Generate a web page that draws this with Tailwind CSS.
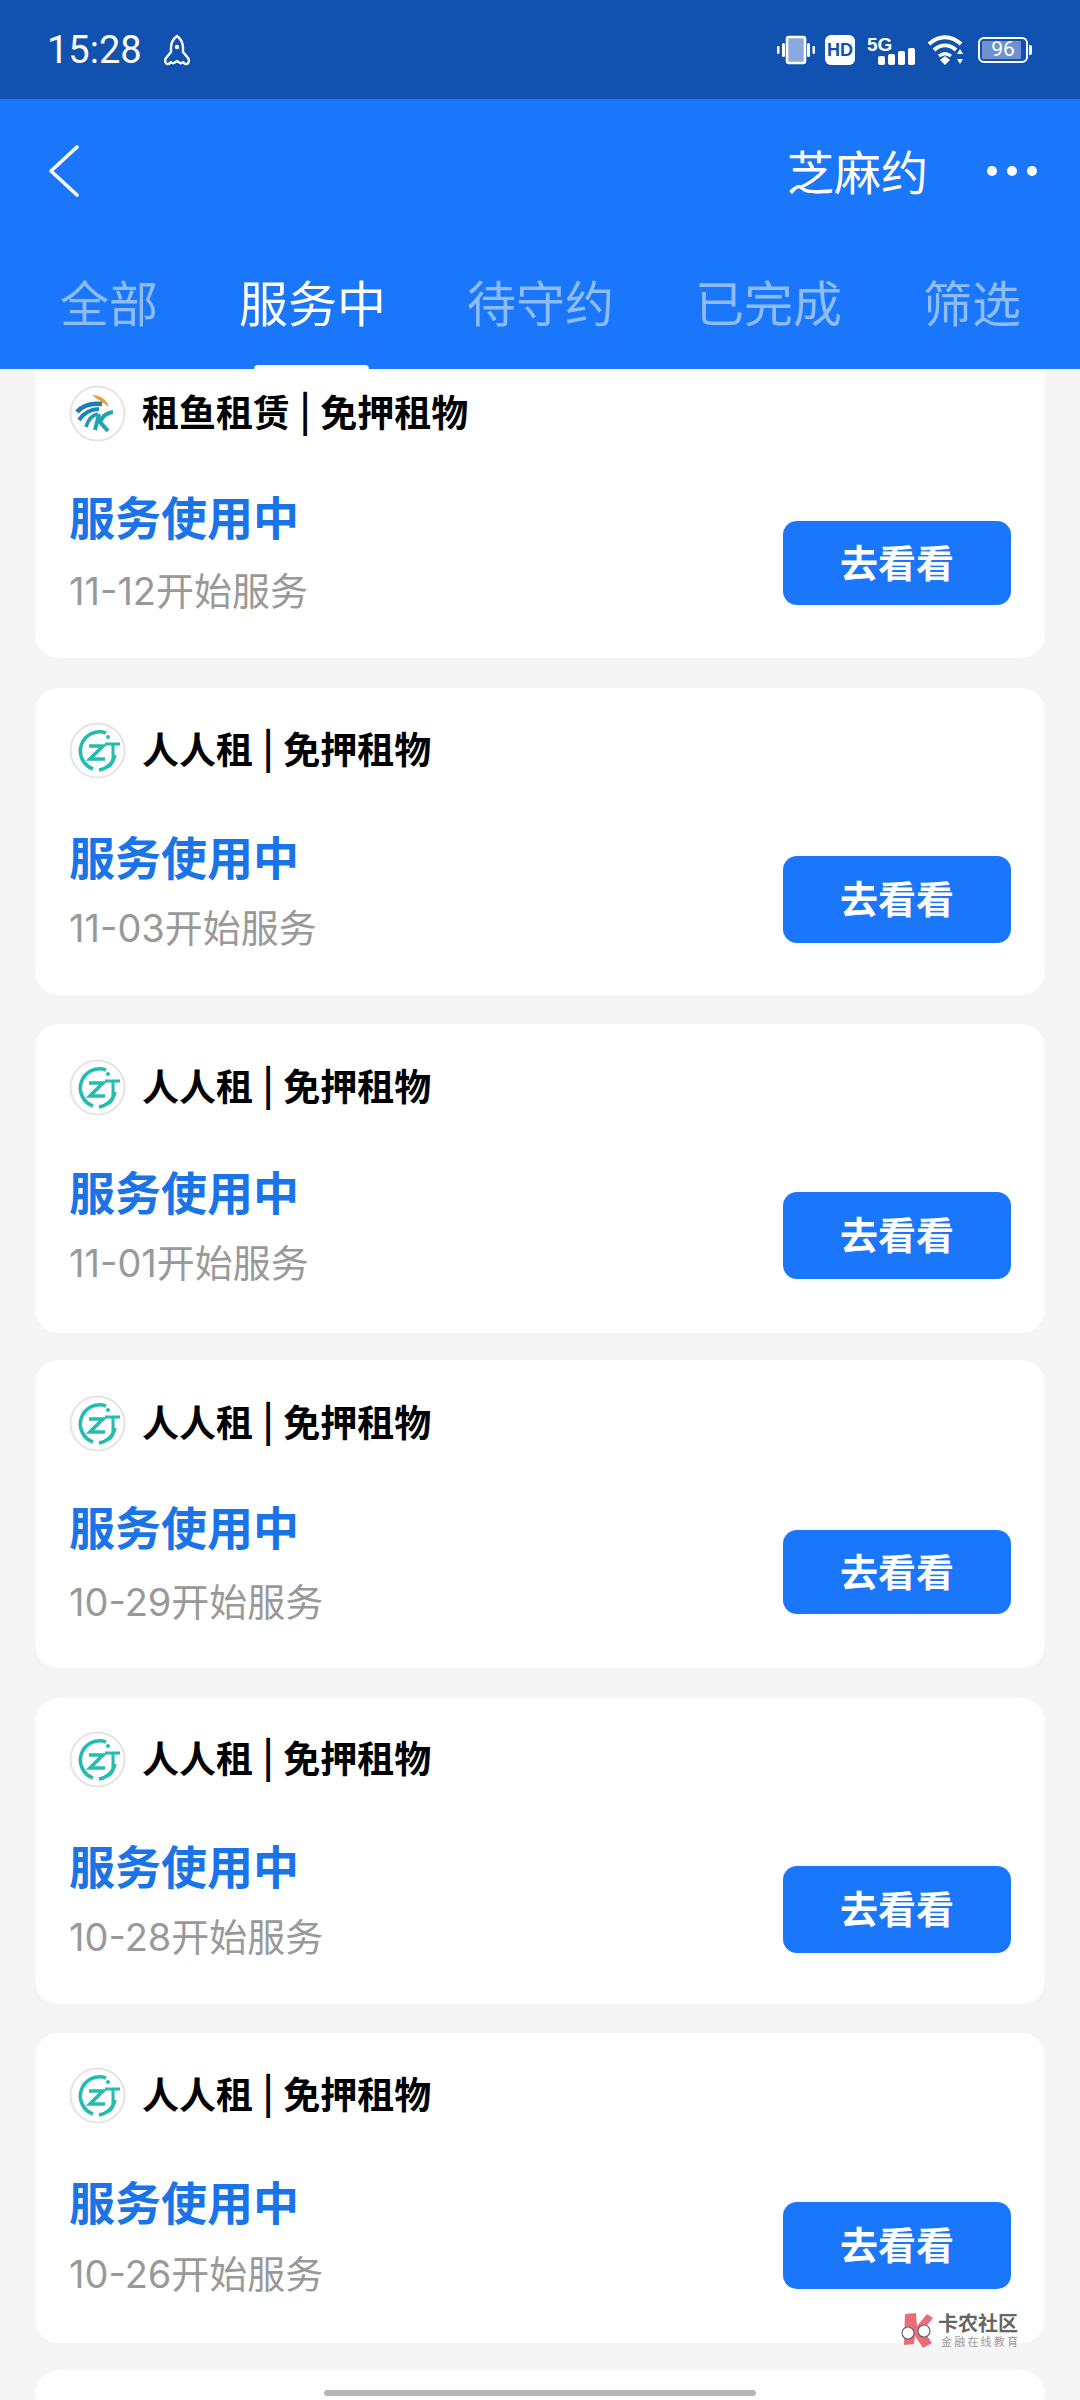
<!DOCTYPE html>
<html lang="zh-CN">

<head>
  <meta charset="UTF-8" />
  <meta name="viewport" content="width=device-width, initial-scale=1.0" />
  <title>芝麻约</title>
  <script src="https://cdn.jsdelivr.net/npm/@tailwindcss/browser@4"></script>
</head>

<body class="bg-[#f5f5f6] font-['Inter','Noto_Sans_CJK_SC',sans-serif]">
  <div class="relative w-[1080px] h-[2400px] overflow-hidden flex flex-col">
    <!-- Status bar -->
    <div class="h-[99px] shrink-0 bg-[#1151b0] flex items-center justify-between pl-[47px] pr-[48px] text-white">
      <div class="flex items-center gap-[21px]">
        <span class="text-[38px] leading-none font-normal font-['Roboto',sans-serif]">15:28</span>
        <svg class="w-[28px] h-[32px]" viewBox="0 0 28 32" fill="none" stroke="white" stroke-width="2.400" stroke-linejoin="round">
          <path d="M14 2c4 3 6 7 6 12v4l5 6c1.500 2 1 5-1 6-2 .8-3-1-4-2-1 1-2 2-3 1l-3-2-3 2c-1 1-2 0-3-1-1 1-2 2.800-4 2-2-1-2.500-4-1-6l5-6v-4c0-5 2-9 6-12z" />
          <circle cx="14" cy="13" r="2.200" fill="white" stroke="none" />
        </svg>
      </div>
      <div class="flex items-center">
        <svg class="w-[38px] h-[30px]" viewBox="0 0 38 30" fill="none">
          <rect x="10" y="2" width="18" height="26" rx="2" fill="#8aa9dc" stroke="white" stroke-width="2.600" />
          <rect x="5" y="8" width="3" height="14" rx="1.500" fill="white" />
          <rect x="30" y="8" width="3" height="14" rx="1.500" fill="white" />
          <rect x="0" y="11" width="2.500" height="8" rx="1.200" fill="white" />
          <rect x="35.500" y="11" width="2.500" height="8" rx="1.200" fill="white" />
        </svg>
        <span class="ml-[10px] w-[30px] h-[30px] bg-white rounded-[6px] flex items-center justify-center text-[#1151b0] text-[18px] font-black leading-none font-['Liberation_Sans',sans-serif]">HD</span>
        <div class="relative ml-[12px] w-[48px] h-[30px]">
          <span class="absolute left-0 top-0 text-[19px] font-bold leading-none font-['Liberation_Sans',sans-serif]">5G</span>
          <div class="absolute right-0 bottom-0 flex items-end gap-[3px]">
            <span class="w-[7px] h-[9px] bg-white rounded-[2px]"></span>
            <span class="w-[7px] h-[11px] bg-white rounded-[2px]"></span>
            <span class="w-[7px] h-[14px] bg-white rounded-[2px]"></span>
            <span class="w-[7px] h-[17px] bg-white rounded-[2px]"></span>
          </div>
        </div>
        <svg class="ml-[13px] w-[36px] h-[30px]" viewBox="0 0 36 30" fill="none">
          <path d="M1 9c10-9 22-9 32 0" stroke="white" stroke-width="4" />
          <path d="M6 15c7-6 15-6 22 0" stroke="white" stroke-width="4" />
          <path d="M11 21c4-3 8-3 12 0" stroke="white" stroke-width="3.400" />
          <path d="M12 25l5-4 5 4-5 5z" fill="white" />
          <path d="M32 14l3 5h-6zM32 29l3-5h-6z" fill="white" />
        </svg>
        <div class="ml-[14px] flex items-center">
          <div class="relative w-[50px] h-[26px] border-[2.500px] border-white rounded-[6px] p-[2px]">
            <div class="h-full w-[92%] bg-[#6f92cf] rounded-[1px]"></div>
            <span class="absolute inset-0 flex items-center justify-center text-[21px] leading-none text-white font-['Roboto',sans-serif]">96</span>
          </div>
          <span class="w-[3px] h-[10px] ml-[1px] bg-white rounded-r-[2px]"></span>
        </div>
      </div>
    </div>

    <!-- Nav -->
    <div class="relative z-10 h-[270px] shrink-0 bg-[#1a76fb] text-white">
      <div class="h-[144px] flex items-center justify-between pl-[49px] pr-[43px]">
        <svg class="w-[30px] h-[52px]" viewBox="0 0 30 52" fill="none" stroke="white" stroke-width="3.600" stroke-linecap="round" stroke-linejoin="round">
          <path d="M28 2L2 26l26 24" />
        </svg>
        <div class="flex items-center gap-[59px]">
          <span class="text-[47px] leading-none pt-[2px]">芝麻约</span>
          <div class="flex gap-[10px]">
            <span class="w-[10px] h-[10px] rounded-full bg-white"></span>
            <span class="w-[10px] h-[10px] rounded-full bg-white"></span>
            <span class="w-[10px] h-[10px] rounded-full bg-white"></span>
          </div>
        </div>
      </div>
      <div class="flex items-center gap-[81px] pl-[60px] pt-[37px] text-[49px] leading-none text-[#8dbcf8]">
        <span>全部</span>
        <span class="text-white">服务中</span>
        <span>待守约</span>
        <span>已完成</span>
        <span>筛选</span>
      </div>
      <div class="absolute left-[254px] bottom-[-2px] w-[115px] h-[6px] bg-white rounded-t-[4px]"></div>
    </div>

    <!-- Order list -->
    <div class="flex flex-col px-[35px] mt-[-17px]">
      <div class="h-[306px] shrink-0 bg-white rounded-[24px] pl-[34px] pr-[34px] pt-[33px]">
        <div class="flex items-center gap-[16px] h-[57px]">
          <svg class="w-[57px] h-[57px] shrink-0" viewBox="0 0 57 57" fill="none">
            <circle cx="28.500" cy="28.500" r="27" fill="white" stroke="#e4e4e4" stroke-width="2" />
            <path d="M23 10c7 0 14 3 17 12-5-4-11-7-17-12z" fill="#e6a23c" />
            <path d="M8 27C14 20 22 18 33 19" stroke="#1c7fb5" stroke-width="4.500" />
            <path d="M10 35C15 28 22 24 30 24" stroke="#1c86b8" stroke-width="4" />
            <path d="M17 42C19 35 23 30 29 29" stroke="#2295b8" stroke-width="3.500" />
            <path d="M26 45L30 29" stroke="#20a5b0" stroke-width="4" />
            <path d="M44 27C37 28 33 32 31 37L39 46" stroke="#20a5b0" stroke-width="4" />
          </svg>
          <span class="text-[37px] leading-none font-bold text-black">租鱼租赁 <span class="font-medium">|</span> 免押租物</span>
        </div>
        <div class="flex justify-between">
          <div class="mt-[46px]">
            <div class="text-[46px] leading-[60px] font-bold text-[#1a74e8]">服务使用中</div>
            <div class="mt-[19px] text-[38px] leading-[48px] text-[#999999]">11-12开始服务</div>
          </div>
          <button class="mt-[79px] w-[228px] h-[84px] bg-[#1a76fb] rounded-[14px] text-white text-[38px] font-bold">去看看</button>
        </div>
      </div>

      <div class="mt-[30px] h-[307px] shrink-0 bg-white rounded-[24px] pl-[34px] pr-[34px] pt-[34px]">
        <div class="flex items-center gap-[16px] h-[57px]">
          <svg class="w-[57px] h-[57px] shrink-0" viewBox="0 0 57 57" fill="none">
            <circle cx="28.500" cy="28.500" r="27" fill="white" stroke="#e4e4e4" stroke-width="2" />
            <path d="M37 11A19 19 0 1 0 24 47M30 48A19 19 0 0 0 46 33" stroke="#22bdb0" stroke-width="3.600" />
            <path d="M20 24h14L21 37h15" stroke="#22bdb0" stroke-width="3.600" />
            <path d="M36 22h15M44 22v14c0 5-3 8-6 9" stroke="#22bdb0" stroke-width="3" />
            <circle cx="39" cy="15" r="2" fill="#22bdb0" />
          </svg>
          <span class="text-[37px] leading-none font-bold text-black">人人租 <span class="font-medium">|</span> 免押租物</span>
        </div>
        <div class="flex justify-between">
          <div class="mt-[49px]">
            <div class="text-[46px] leading-[60px] font-bold text-[#1a74e8]">服务使用中</div>
            <div class="mt-[16px] text-[38px] leading-[48px] text-[#999999]">11-03开始服务</div>
          </div>
          <button class="mt-[77px] w-[228px] h-[87px] bg-[#1a76fb] rounded-[14px] text-white text-[38px] font-bold">去看看</button>
        </div>
      </div>

      <div class="mt-[29px] h-[309px] shrink-0 bg-white rounded-[24px] pl-[34px] pr-[34px] pt-[35px]">
        <div class="flex items-center gap-[16px] h-[57px]">
          <svg class="w-[57px] h-[57px] shrink-0" viewBox="0 0 57 57" fill="none">
            <circle cx="28.500" cy="28.500" r="27" fill="white" stroke="#e4e4e4" stroke-width="2" />
            <path d="M37 11A19 19 0 1 0 24 47M30 48A19 19 0 0 0 46 33" stroke="#22bdb0" stroke-width="3.600" />
            <path d="M20 24h14L21 37h15" stroke="#22bdb0" stroke-width="3.600" />
            <path d="M36 22h15M44 22v14c0 5-3 8-6 9" stroke="#22bdb0" stroke-width="3" />
            <circle cx="39" cy="15" r="2" fill="#22bdb0" />
          </svg>
          <span class="text-[37px] leading-none font-bold text-black">人人租 <span class="font-medium">|</span> 免押租物</span>
        </div>
        <div class="flex justify-between">
          <div class="mt-[47px]">
            <div class="text-[46px] leading-[60px] font-bold text-[#1a74e8]">服务使用中</div>
            <div class="mt-[16px] text-[38px] leading-[48px] text-[#999999]">11-01开始服务</div>
          </div>
          <button class="mt-[76px] w-[228px] h-[87px] bg-[#1a76fb] rounded-[14px] text-white text-[38px] font-bold">去看看</button>
        </div>
      </div>

      <div class="mt-[27px] h-[308px] shrink-0 bg-white rounded-[24px] pl-[34px] pr-[34px] pt-[35px]">
        <div class="flex items-center gap-[16px] h-[57px]">
          <svg class="w-[57px] h-[57px] shrink-0" viewBox="0 0 57 57" fill="none">
            <circle cx="28.500" cy="28.500" r="27" fill="white" stroke="#e4e4e4" stroke-width="2" />
            <path d="M37 11A19 19 0 1 0 24 47M30 48A19 19 0 0 0 46 33" stroke="#22bdb0" stroke-width="3.600" />
            <path d="M20 24h14L21 37h15" stroke="#22bdb0" stroke-width="3.600" />
            <path d="M36 22h15M44 22v14c0 5-3 8-6 9" stroke="#22bdb0" stroke-width="3" />
            <circle cx="39" cy="15" r="2" fill="#22bdb0" />
          </svg>
          <span class="text-[37px] leading-none font-bold text-black">人人租 <span class="font-medium">|</span> 免押租物</span>
        </div>
        <div class="flex justify-between">
          <div class="mt-[46px]">
            <div class="text-[46px] leading-[60px] font-bold text-[#1a74e8]">服务使用中</div>
            <div class="mt-[20px] text-[38px] leading-[48px] text-[#999999]">10-29开始服务</div>
          </div>
          <button class="mt-[78px] w-[228px] h-[84px] bg-[#1a76fb] rounded-[14px] text-white text-[38px] font-bold">去看看</button>
        </div>
      </div>

      <div class="mt-[30px] h-[306px] shrink-0 bg-white rounded-[24px] pl-[34px] pr-[34px] pt-[33px]">
        <div class="flex items-center gap-[16px] h-[57px]">
          <svg class="w-[57px] h-[57px] shrink-0" viewBox="0 0 57 57" fill="none">
            <circle cx="28.500" cy="28.500" r="27" fill="white" stroke="#e4e4e4" stroke-width="2" />
            <path d="M37 11A19 19 0 1 0 24 47M30 48A19 19 0 0 0 46 33" stroke="#22bdb0" stroke-width="3.600" />
            <path d="M20 24h14L21 37h15" stroke="#22bdb0" stroke-width="3.600" />
            <path d="M36 22h15M44 22v14c0 5-3 8-6 9" stroke="#22bdb0" stroke-width="3" />
            <circle cx="39" cy="15" r="2" fill="#22bdb0" />
          </svg>
          <span class="text-[37px] leading-none font-bold text-black">人人租 <span class="font-medium">|</span> 免押租物</span>
        </div>
        <div class="flex justify-between">
          <div class="mt-[49px]">
            <div class="text-[46px] leading-[60px] font-bold text-[#1a74e8]">服务使用中</div>
            <div class="mt-[16px] text-[38px] leading-[48px] text-[#999999]">10-28开始服务</div>
          </div>
          <button class="mt-[78px] w-[228px] h-[87px] bg-[#1a76fb] rounded-[14px] text-white text-[38px] font-bold">去看看</button>
        </div>
      </div>

      <div class="mt-[29px] h-[310px] shrink-0 bg-white rounded-[24px] pl-[34px] pr-[34px] pt-[34px]">
        <div class="flex items-center gap-[16px] h-[57px]">
          <svg class="w-[57px] h-[57px] shrink-0" viewBox="0 0 57 57" fill="none">
            <circle cx="28.500" cy="28.500" r="27" fill="white" stroke="#e4e4e4" stroke-width="2" />
            <path d="M37 11A19 19 0 1 0 24 47M30 48A19 19 0 0 0 46 33" stroke="#22bdb0" stroke-width="3.600" />
            <path d="M20 24h14L21 37h15" stroke="#22bdb0" stroke-width="3.600" />
            <path d="M36 22h15M44 22v14c0 5-3 8-6 9" stroke="#22bdb0" stroke-width="3" />
            <circle cx="39" cy="15" r="2" fill="#22bdb0" />
          </svg>
          <span class="text-[37px] leading-none font-bold text-black">人人租 <span class="font-medium">|</span> 免押租物</span>
        </div>
        <div class="flex justify-between">
          <div class="mt-[49px]">
            <div class="text-[46px] leading-[60px] font-bold text-[#1a74e8]">服务使用中</div>
            <div class="mt-[17px] text-[38px] leading-[48px] text-[#999999]">10-26开始服务</div>
          </div>
          <button class="mt-[78px] w-[228px] h-[87px] bg-[#1a76fb] rounded-[14px] text-white text-[38px] font-bold">去看看</button>
        </div>
      </div>

      <!-- next card, only its top edge is on screen -->
      <div class="mt-[27px] h-[308px] shrink-0 bg-white rounded-[24px]"></div>
    </div>

    <!-- Community watermark -->
    <div class="absolute left-[900px] top-[2313px] flex items-center gap-[4px]">
      <svg class="w-[34px] h-[35px]" viewBox="0 0 34 35" fill="none">
        <path d="M5 1l11-1 1 13L27 1l6 4-10 12 9 13-9 5-8-12-1 8-10 1z" fill="#e96c78" />
        <circle cx="8" cy="20" r="6" fill="white" stroke="#666" stroke-width="1.200" />
        <circle cx="24" cy="18" r="6" fill="white" stroke="#666" stroke-width="1.200" />
      </svg>
      <div class="flex flex-col">
        <span class="text-[20px] leading-[20px] font-bold text-[#666666]">卡农社区</span>
        <span class="mt-[2px] pl-[3px] text-[11px] leading-[12px] tracking-[2.200px] text-[#999999] whitespace-nowrap">金融在线教育</span>
      </div>
    </div>

    <!-- Home indicator -->
    <div class="absolute left-[324px] top-[2390px] w-[432px] h-[6px] rounded-full bg-[#b5b5b5]"></div>
  </div>
</body>

</html>
